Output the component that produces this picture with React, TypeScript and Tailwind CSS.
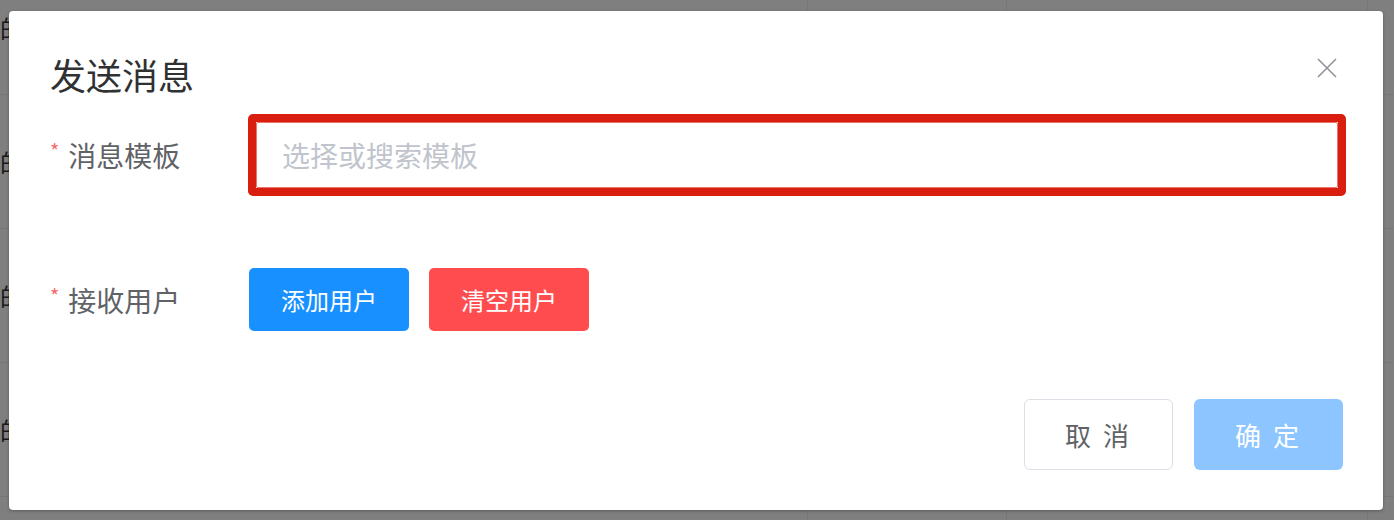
import React from "react";

const rows = [0, 1, 2, 3, 4];

export default function App() {
  return (
    <div
      className="relative w-[1394px] h-[520px] overflow-hidden bg-white"
      style={{ fontFamily: '"Noto Sans CJK SC", "Noto Sans", sans-serif' }}
    >
      {/* background table */}
      <div className="flex flex-col mt-[-39px]">
        {rows.map((r) => (
          <div key={r} className="flex h-[134px] border-b border-[#ebeef5] shrink-0">
            <div className="w-[807px] flex items-center text-[24px] text-[#333]">{r < 4 ? "的" : ""}</div>
            <div className="w-[199px] border-l border-[#ebeef5]" />
            <div className="w-[361px] border-l border-[#ebeef5]" />
            <div className="flex-1 border-l border-[#ebeef5]" />
          </div>
        ))}
      </div>

      {/* overlay */}
      <div className="absolute inset-0 bg-black/50" />

      {/* dialog */}
      <div className="absolute left-[9px] top-[11px] w-[1374px] h-[499px] bg-white rounded-[4px] shadow-[0_1px_3px_rgba(0,0,0,0.3)] flex flex-col">
        <div className="pl-[41px] pt-[45px]">
          <div className="h-[36px] leading-[36px] text-[36px] text-[#303133]">发送消息</div>
        </div>
        <button className="absolute right-[46px] top-[47px] w-[20px] h-[20px] flex items-center justify-center">
          <svg width="20" height="20" viewBox="0 0 20 20" fill="none" stroke="#909399" strokeWidth="1.6">
            <path d="M1 1 L19 19 M19 1 L1 19" />
          </svg>
        </button>

        {/* row 1 */}
        <div className="flex items-center mt-[22px] pl-[41px] pr-[37px] h-[82px]">
          <div className="w-[198px] shrink-0 flex items-center text-[28px] text-[#606266] leading-none">
            <span className="text-[20px] leading-none text-[#f56c6c] mr-[9px] -mt-[8px]">*</span>
            <span className="leading-none">消息模板</span>
          </div>
          <div className="flex-1 h-[82px] border-[8px] border-[#d91e0f] rounded-[5px]">
            <div className="h-full border border-[#e9756b] rounded-[2px] flex items-center pl-[25px] text-[28px] text-[#c0c4cc]">
              选择或搜索模板
            </div>
          </div>
        </div>

        {/* row 2 */}
        <div className="flex items-center mt-[72px] pl-[41px] h-[63px]">
          <div className="w-[199px] shrink-0 flex items-center text-[28px] text-[#606266] leading-none">
            <span className="text-[20px] leading-none text-[#f56c6c] mr-[9px] -mt-[8px]">*</span>
            <span className="leading-none">接收用户</span>
          </div>
          <div className="flex gap-[20px]">
            <button className="w-[160px] h-[63px] rounded-[5px] bg-[#1890ff] text-white text-[24px]">添加用户</button>
            <button className="w-[160px] h-[63px] rounded-[5px] bg-[#ff4d4f] text-white text-[24px]">清空用户</button>
          </div>
        </div>

        {/* footer */}
        <div className="flex justify-end gap-[21px] mt-[68px] pr-[40px]">
          <button className="w-[149px] h-[71px] rounded-[6px] border border-[#dcdfe6] bg-white text-[26px] text-[#606266] tracking-[3px]">
            取 消
          </button>
          <button className="w-[149px] h-[71px] rounded-[6px] bg-[#8cc5ff] text-white text-[26px] tracking-[3px]">
            确 定
          </button>
        </div>
      </div>
    </div>
  );
}
